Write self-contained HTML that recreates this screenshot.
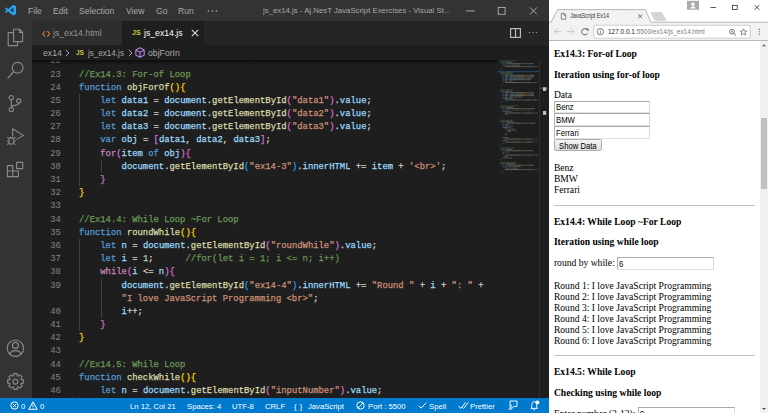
<!DOCTYPE html>
<html><head><meta charset="utf-8">
<style>
*{box-sizing:border-box}
html,body{margin:0;padding:0}
body{width:768px;height:413px;overflow:hidden;position:relative;background:#1e1e1e;font-family:"Liberation Sans",sans-serif}
.abs{position:absolute}
#vs{position:absolute;left:0;top:0;width:549px;height:413px;background:#1e1e1e;overflow:hidden}
#title{position:absolute;left:0;top:0;width:549px;height:21px;background:#333333;color:#a8a8a8;font-size:8.6px}
#title .m{position:absolute;top:5px;line-height:12px;white-space:nowrap}
#act{position:absolute;left:0;top:21px;width:32px;height:377px;background:#333333}
#tabs{position:absolute;left:32px;top:21px;width:517px;height:24px;background:#252526}
.tab{position:absolute;top:0;height:24px;font-size:8.7px;white-space:nowrap}
#crumb{position:absolute;left:32px;top:45px;width:517px;height:15px;background:#1e1e1e;color:#a9a9a9;font-size:8.7px;white-space:nowrap}
#editor{position:absolute;left:32px;top:60px;width:517px;height:338px;overflow:hidden}
#codewrap{position:absolute;left:-32px;top:-60px;width:549px;height:413px}
.ln{position:absolute;left:30px;width:30.8px;text-align:right;height:13.19px;line-height:13.19px;font-family:"Liberation Mono",monospace;font-size:9.7px;color:#858585;transform:scaleX(0.9153);transform-origin:100% 0}
.cl{position:absolute;left:79.2px;height:13.19px;line-height:13.19px;font-family:"Liberation Mono",monospace;font-size:9.7px;color:#d4d4d4;white-space:pre;-webkit-text-stroke-width:0.25px;transform:scaleX(0.9153);transform-origin:0 0}
.ig{position:absolute;width:1px;background:#404040}
#status{position:absolute;left:0;top:398px;width:549px;height:15px;background:#007acc;color:#ffffff;font-size:7.7px;white-space:nowrap}
#status .s{position:absolute;top:3px;line-height:11px}
#br{position:absolute;left:549px;top:0;width:219px;height:413px;background:#ffffff;overflow:hidden}
.pt{position:absolute;left:4.9px;height:11px;line-height:11px;font-family:"Liberation Serif",serif;font-size:9.6px;color:#000;white-space:nowrap}
.pb{font-weight:bold}
.inp{position:absolute;background:#fff;border:1px solid #c0c0c0;border-top-color:#a8a8a8;border-left-color:#b4b4b4;border-bottom-color:#e0e0e0;border-right-color:#d8d8d8}
.it{position:absolute;font-size:8.5px;line-height:10px;color:#000;white-space:nowrap;transform:scaleX(0.905);transform-origin:0 0;margin-top:0.4px}
.hr{position:absolute;left:4.9px;width:201px;height:1px;background:#c0c0c0}
</style></head>
<body>
<div id="vs">
  <div id="title">
    <svg class="abs" style="left:4.8px;top:5.4px" width="11.2" height="10.4" viewBox="0 0 100 100" preserveAspectRatio="none"><path d="M96.46 10.8 L75.86 0.87 C73.48 -0.28 70.63 0.2 68.76 2.07 L29.35 38.04 L12.19 25.01 C10.59 23.79 8.35 23.89 6.86 25.25 L1.36 30.25 C-0.45 31.9 -0.46 34.75 1.35 36.4 L16.24 50 L1.35 63.6 C-0.46 65.25 -0.45 68.1 1.36 69.75 L6.86 74.75 C8.35 76.11 10.59 76.21 12.19 74.99 L29.35 61.96 L68.76 97.93 C70.63 99.8 73.48 100.28 75.86 99.13 L96.46 89.2 C98.62 88.16 100 85.97 100 83.57 V16.43 C100 14.03 98.62 11.84 96.46 10.8 Z M75.02 72.7 L45.11 50 L75.02 27.3 V72.7 Z" fill="#23a3f0" fill-rule="evenodd"/></svg>
    <span class="m" style="left:28px">File</span>
    <span class="m" style="left:53px">Edit</span>
    <span class="m" style="left:79px">Selection</span>
    <span class="m" style="left:126px">View</span>
    <span class="m" style="left:156px">Go</span>
    <span class="m" style="left:178px">Run</span>
    <svg class="abs" style="left:206px;top:9px" width="13" height="4" viewBox="0 0 13 4"><circle cx="2.4" cy="2" r="0.85" fill="#a8a8a8"/><circle cx="6.4" cy="2" r="0.85" fill="#a8a8a8"/><circle cx="10.4" cy="2" r="0.85" fill="#a8a8a8"/></svg>
    <svg class="abs" style="left:460px;top:0" width="89" height="21" viewBox="460 0 89 21" fill="none" stroke="#b4b4b4" stroke-width="0.9">
      <path d="M466 10.9 H474.5"/>
      <rect x="498.2" y="7.4" width="6.9" height="6.9"/>
      <path d="M530 7.4 L537 14.4 M537 7.4 L530 14.4"/>
    </svg>
    <span class="m" style="left:263px;font-size:7.8px">js_ex14.js - Aj.NesT JavaScript Exercises - Visual St...</span>
  </div>
  <div id="act">
    <svg class="abs" style="left:0;top:0" width="32" height="377" viewBox="0 21 32 377" fill="none" stroke="#8b8b8b" stroke-width="1.1" stroke-linejoin="round">
      <!-- explorer -->
      <path d="M13.6 29.2 H19.6 L22.6 32.2 V41.6 H13.6 Z M19.4 29.2 V32.4 H22.6"/>
      <path d="M13.6 32.6 H8.2 V45.6 H17.6 V41.8"/>
      <!-- search -->
      <circle cx="17.6" cy="67.8" r="5.4"/>
      <path d="M13.8 71.6 L7.6 78.4" stroke-width="1.3"/>
      <!-- source control -->
      <circle cx="11.3" cy="97.6" r="2.1"/>
      <circle cx="18.8" cy="101" r="2.1"/>
      <circle cx="11.3" cy="109.6" r="2.1"/>
      <path d="M11.3 99.7 V107.5 M18.8 103.1 Q18.8 105.2 15 105.4 Q11.3 105.6 11.3 107.5"/>
      <!-- run debug -->
      <path d="M12.6 136.5 V128.8 L23.4 135.4 L16.4 139.6"/>
      <ellipse cx="11.3" cy="141" rx="2.6" ry="3.2"/>
      <path d="M8.7 138.2 L7.2 137.2 M13.9 138.2 L15.4 137.2 M8.4 141 H6.8 M14.2 141 H15.8 M8.7 143.6 L7.2 144.6 M13.9 143.6 L15.4 144.6 M9.8 137.8 H12.8"/>
      <!-- extensions -->
      <path d="M7.4 165.6 H12.8 V171 H7.4 Z M7.4 171 H12.8 V176.6 H7.4 Z M12.8 171 H18.4 V176.6 H12.8 Z"/>
      <rect x="16.6" y="162.4" width="6.2" height="6.2"/>
      <!-- account -->
      <circle cx="15.4" cy="348.2" r="8.2"/>
      <circle cx="15.4" cy="345.4" r="3"/>
      <path d="M9.8 354.2 Q11 350.6 15.4 350.6 Q19.8 350.6 21 354.2"/>
      <!-- gear -->
      <circle cx="15.4" cy="381.7" r="2.4"/>
    </svg>
    <svg class="abs" style="left:7px;top:352.2px" width="17" height="17" viewBox="-8.5 -8.5 17 17"><path fill="none" stroke="#8b8b8b" stroke-width="1.1" stroke-linejoin="round" d="M5.71 -1.85 L7.84 -1.59 L7.84 1.59 L5.71 1.85 L5.35 2.72 L6.67 4.42 L4.42 6.67 L2.72 5.35 L1.85 5.71 L1.59 7.84 L-1.59 7.84 L-1.85 5.71 L-2.72 5.35 L-4.42 6.67 L-6.67 4.42 L-5.35 2.72 L-5.71 1.85 L-7.84 1.59 L-7.84 -1.59 L-5.71 -1.85 L-5.35 -2.72 L-6.67 -4.42 L-4.42 -6.67 L-2.72 -5.35 L-1.85 -5.71 L-1.59 -7.84 L1.59 -7.84 L1.85 -5.71 L2.72 -5.35 L4.42 -6.67 L6.67 -4.42 L5.35 -2.72 Z"/></svg>
  </div>
  <div id="tabs">
    <div class="tab" style="left:0;width:90px;background:#2d2d2d;color:#969696">
      <svg class="abs" style="left:9.5px;top:8.5px" width="9" height="8" viewBox="0 0 9 8"><path d="M3 1 L0.8 3.8 L3 6.6 M5.4 1 L7.6 3.8 L5.4 6.6" stroke="#e37933" stroke-width="1.05" fill="none"/></svg>
      <span class="abs" style="left:21px;top:6px;line-height:12px">js_ex14.html</span>
    </div>
    <div class="tab" style="left:90px;width:82px;background:#1e1e1e;color:#ffffff">
      <span class="abs" style="left:10px;top:7px;line-height:10px;font-size:7px;font-weight:bold;color:#cbcb41">JS</span>
      <span class="abs" style="left:22px;top:6px;line-height:12px">js_ex14.js</span>
      <svg class="abs" style="left:69px;top:8px" width="8" height="8" viewBox="0 0 8 8"><path d="M0.8 0.8 L7.2 7.2 M7.2 0.8 L0.8 7.2" stroke="#d8d8d8" stroke-width="1.15"/></svg>
    </div>
    <svg class="abs" style="left:478px;top:7px" width="11" height="10" viewBox="0 0 11 10"><rect x="0.6" y="0.6" width="9.8" height="8.8" fill="none" stroke="#c5c5c5" stroke-width="1.1"/><path d="M5.5 0.6 V9.4" stroke="#c5c5c5" stroke-width="1.1"/></svg>
    <span class="abs" style="left:496px;top:5px;line-height:12px;color:#c5c5c5;font-size:9px;letter-spacing:0.5px">···</span>
  </div>
  <div id="crumb">
    <span class="abs" style="left:11px;top:2px;line-height:12px">ex14</span>
    <svg class="abs" style="left:33px;top:4px" width="5" height="8" viewBox="0 0 5 8"><path d="M0.8 0.8 L4 4 L0.8 7.2" stroke="#a9a9a9" stroke-width="1" fill="none"/></svg>
    <span class="abs" style="left:44px;top:3px;line-height:10px;font-size:6.5px;font-weight:bold;color:#cbcb41">JS</span>
    <span class="abs" style="left:56px;top:2px;line-height:12px;transform:scaleX(0.93);transform-origin:0 0">js_ex14.js</span>
    <svg class="abs" style="left:96px;top:4px" width="5" height="8" viewBox="0 0 5 8"><path d="M0.8 0.8 L4 4 L0.8 7.2" stroke="#a9a9a9" stroke-width="1" fill="none"/></svg>
    <svg class="abs" style="left:103px;top:2px" width="10" height="11" viewBox="0 0 10 11"><path d="M5 0.7 L9.2 3 V8 L5 10.3 L0.8 8 V3 Z M0.8 3 L5 5.3 L9.2 3 M5 5.3 V10.3" stroke="#b180d7" stroke-width="1.1" fill="none" stroke-linejoin="round"/></svg>
    <span class="abs" style="left:116px;top:2px;line-height:12px">objForIn</span>
  </div>
  <div id="editor"><div id="codewrap">
<div class="ig" style="left:79.2px;top:93.88px;height:92.33px"></div>
<div class="ig" style="left:100.5px;top:159.83px;height:13.19px"></div>
<div class="ig" style="left:79.2px;top:238.97px;height:92.33px"></div>
<div class="ig" style="left:100.5px;top:278.54px;height:39.57px"></div>
<div class="ig" style="left:79.2px;top:397.25px;height:26.38px"></div>
<div class="ln" style="top:54.31px">22</div>
<div class="ln" style="top:67.50px">23</div>
<div class="cl" style="top:67.50px"><span style="color:#6A9955">//Ex14.3: For-of Loop</span></div>
<div class="ln" style="top:80.69px">24</div>
<div class="cl" style="top:80.69px"><span style="color:#569CD6">function</span><span style="color:#D4D4D4"> </span><span style="color:#DCDCAA">objForOf</span><span style="color:#FFD700">(){</span></div>
<div class="ln" style="top:93.88px">25</div>
<div class="cl" style="top:93.88px"><span style="color:#D4D4D4">    </span><span style="color:#569CD6">let</span><span style="color:#D4D4D4"> </span><span style="color:#9CDCFE">data1</span><span style="color:#D4D4D4"> = </span><span style="color:#9CDCFE">document</span><span style="color:#D4D4D4">.</span><span style="color:#DCDCAA">getElementById</span><span style="color:#DA70D6">(</span><span style="color:#CE9178">&quot;data1&quot;</span><span style="color:#DA70D6">)</span><span style="color:#D4D4D4">.</span><span style="color:#9CDCFE">value</span><span style="color:#D4D4D4">;</span></div>
<div class="ln" style="top:107.07px">26</div>
<div class="cl" style="top:107.07px"><span style="color:#D4D4D4">    </span><span style="color:#569CD6">let</span><span style="color:#D4D4D4"> </span><span style="color:#9CDCFE">data2</span><span style="color:#D4D4D4"> = </span><span style="color:#9CDCFE">document</span><span style="color:#D4D4D4">.</span><span style="color:#DCDCAA">getElementById</span><span style="color:#DA70D6">(</span><span style="color:#CE9178">&quot;data2&quot;</span><span style="color:#DA70D6">)</span><span style="color:#D4D4D4">.</span><span style="color:#9CDCFE">value</span><span style="color:#D4D4D4">;</span></div>
<div class="ln" style="top:120.26px">27</div>
<div class="cl" style="top:120.26px"><span style="color:#D4D4D4">    </span><span style="color:#569CD6">let</span><span style="color:#D4D4D4"> </span><span style="color:#9CDCFE">data3</span><span style="color:#D4D4D4"> = </span><span style="color:#9CDCFE">document</span><span style="color:#D4D4D4">.</span><span style="color:#DCDCAA">getElementById</span><span style="color:#DA70D6">(</span><span style="color:#CE9178">&quot;data3&quot;</span><span style="color:#DA70D6">)</span><span style="color:#D4D4D4">.</span><span style="color:#9CDCFE">value</span><span style="color:#D4D4D4">;</span></div>
<div class="ln" style="top:133.45px">28</div>
<div class="cl" style="top:133.45px"><span style="color:#D4D4D4">    </span><span style="color:#569CD6">var</span><span style="color:#D4D4D4"> </span><span style="color:#9CDCFE">obj</span><span style="color:#D4D4D4"> = </span><span style="color:#DA70D6">[</span><span style="color:#9CDCFE">data1</span><span style="color:#D4D4D4">, </span><span style="color:#9CDCFE">data2</span><span style="color:#D4D4D4">, </span><span style="color:#9CDCFE">data3</span><span style="color:#DA70D6">]</span><span style="color:#D4D4D4">;</span></div>
<div class="ln" style="top:146.64px">29</div>
<div class="cl" style="top:146.64px"><span style="color:#D4D4D4">    </span><span style="color:#C586C0">for</span><span style="color:#DA70D6">(</span><span style="color:#9CDCFE">item</span><span style="color:#D4D4D4"> </span><span style="color:#569CD6">of</span><span style="color:#D4D4D4"> </span><span style="color:#9CDCFE">obj</span><span style="color:#DA70D6">){</span></div>
<div class="ln" style="top:159.83px">30</div>
<div class="cl" style="top:159.83px"><span style="color:#D4D4D4">        </span><span style="color:#9CDCFE">document</span><span style="color:#D4D4D4">.</span><span style="color:#DCDCAA">getElementById</span><span style="color:#179FFF">(</span><span style="color:#CE9178">&quot;ex14-3&quot;</span><span style="color:#179FFF">)</span><span style="color:#D4D4D4">.</span><span style="color:#9CDCFE">innerHTML</span><span style="color:#D4D4D4"> += </span><span style="color:#9CDCFE">item</span><span style="color:#D4D4D4"> + </span><span style="color:#CE9178">&#x27;&lt;br&gt;&#x27;</span><span style="color:#D4D4D4">;</span></div>
<div class="ln" style="top:173.02px">31</div>
<div class="cl" style="top:173.02px"><span style="color:#D4D4D4">    </span><span style="color:#DA70D6">}</span></div>
<div class="ln" style="top:186.21px">32</div>
<div class="cl" style="top:186.21px"><span style="color:#FFD700">}</span></div>
<div class="ln" style="top:199.40px">33</div>
<div class="ln" style="top:212.59px">34</div>
<div class="cl" style="top:212.59px"><span style="color:#6A9955">//Ex14.4: While Loop ~For Loop</span></div>
<div class="ln" style="top:225.78px">35</div>
<div class="cl" style="top:225.78px"><span style="color:#569CD6">function</span><span style="color:#D4D4D4"> </span><span style="color:#DCDCAA">roundWhile</span><span style="color:#FFD700">(){</span></div>
<div class="ln" style="top:238.97px">36</div>
<div class="cl" style="top:238.97px"><span style="color:#D4D4D4">    </span><span style="color:#569CD6">let</span><span style="color:#D4D4D4"> </span><span style="color:#9CDCFE">n</span><span style="color:#D4D4D4"> = </span><span style="color:#9CDCFE">document</span><span style="color:#D4D4D4">.</span><span style="color:#DCDCAA">getElementById</span><span style="color:#DA70D6">(</span><span style="color:#CE9178">&quot;roundWhile&quot;</span><span style="color:#DA70D6">)</span><span style="color:#D4D4D4">.</span><span style="color:#9CDCFE">value</span><span style="color:#D4D4D4">;</span></div>
<div class="ln" style="top:252.16px">37</div>
<div class="cl" style="top:252.16px"><span style="color:#D4D4D4">    </span><span style="color:#569CD6">let</span><span style="color:#D4D4D4"> </span><span style="color:#9CDCFE">i</span><span style="color:#D4D4D4"> = </span><span style="color:#B5CEA8">1</span><span style="color:#D4D4D4">;      </span><span style="color:#6A9955">//for(let i = 1; i &lt;= n; i++)</span></div>
<div class="ln" style="top:265.35px">38</div>
<div class="cl" style="top:265.35px"><span style="color:#D4D4D4">    </span><span style="color:#C586C0">while</span><span style="color:#DA70D6">(</span><span style="color:#9CDCFE">i</span><span style="color:#D4D4D4"> &lt;= </span><span style="color:#9CDCFE">n</span><span style="color:#DA70D6">){</span></div>
<div class="ln" style="top:278.54px">39</div>
<div class="cl" style="top:278.54px"><span style="color:#D4D4D4">        </span><span style="color:#9CDCFE">document</span><span style="color:#D4D4D4">.</span><span style="color:#DCDCAA">getElementById</span><span style="color:#179FFF">(</span><span style="color:#CE9178">&quot;ex14-4&quot;</span><span style="color:#179FFF">)</span><span style="color:#D4D4D4">.</span><span style="color:#9CDCFE">innerHTML</span><span style="color:#D4D4D4"> += </span><span style="color:#CE9178">&quot;Round &quot;</span><span style="color:#D4D4D4"> + </span><span style="color:#9CDCFE">i</span><span style="color:#D4D4D4"> + </span><span style="color:#CE9178">&quot;: &quot;</span><span style="color:#D4D4D4"> +</span></div>
<div class="cl" style="top:291.73px"><span style="color:#D4D4D4">        </span><span style="color:#CE9178">&quot;I love JavaScript Programming &lt;br&gt;&quot;</span><span style="color:#D4D4D4">;</span></div>
<div class="ln" style="top:304.92px">40</div>
<div class="cl" style="top:304.92px"><span style="color:#D4D4D4">        </span><span style="color:#9CDCFE">i</span><span style="color:#D4D4D4">++;</span></div>
<div class="ln" style="top:318.11px">41</div>
<div class="cl" style="top:318.11px"><span style="color:#D4D4D4">    </span><span style="color:#DA70D6">}</span></div>
<div class="ln" style="top:331.30px">42</div>
<div class="cl" style="top:331.30px"><span style="color:#FFD700">}</span></div>
<div class="ln" style="top:344.49px">43</div>
<div class="ln" style="top:357.68px">44</div>
<div class="cl" style="top:357.68px"><span style="color:#6A9955">//Ex14.5: While Loop</span></div>
<div class="ln" style="top:370.87px">45</div>
<div class="cl" style="top:370.87px"><span style="color:#569CD6">function</span><span style="color:#D4D4D4"> </span><span style="color:#DCDCAA">checkWhile</span><span style="color:#FFD700">(){</span></div>
<div class="ln" style="top:384.06px">46</div>
<div class="cl" style="top:384.06px"><span style="color:#D4D4D4">    </span><span style="color:#569CD6">let</span><span style="color:#D4D4D4"> </span><span style="color:#9CDCFE">n</span><span style="color:#D4D4D4"> = </span><span style="color:#9CDCFE">document</span><span style="color:#D4D4D4">.</span><span style="color:#DCDCAA">getElementById</span><span style="color:#DA70D6">(</span><span style="color:#CE9178">&quot;inputNumber&quot;</span><span style="color:#DA70D6">)</span><span style="color:#D4D4D4">.</span><span style="color:#9CDCFE">value</span><span style="color:#D4D4D4">;</span></div>
<div class="ln" style="top:397.25px">47</div>
<div class="cl" style="top:397.25px"><span style="color:#D4D4D4">    </span><span style="color:#569CD6">let</span><span style="color:#D4D4D4"> </span><span style="color:#9CDCFE">i</span><span style="color:#D4D4D4"> = </span><span style="color:#B5CEA8">2</span><span style="color:#D4D4D4">;</span></div>
<div class="abs" style="left:0;top:60px;width:497px;height:5px;background:linear-gradient(rgba(0,0,0,0.55),rgba(0,0,0,0))"></div>
<svg class="abs" style="left:497px;top:60px" width="52" height="338" viewBox="497 60 52 338">
<rect x="497" y="71.2" width="42" height="1" fill="#264f78" opacity="0.9"/>
<g opacity="0.36">
<rect x="500.00" y="60.30" width="5.58" height="1.01" fill="#6A9955"/>
<rect x="506.20" y="60.30" width="1.86" height="1.01" fill="#6A9955"/>
<rect x="508.68" y="60.30" width="2.48" height="1.01" fill="#6A9955"/>
<rect x="511.78" y="60.30" width="3.72" height="1.01" fill="#6A9955"/>
<rect x="500.00" y="61.75" width="4.96" height="1.01" fill="#569CD6"/>
<rect x="505.58" y="61.75" width="4.96" height="1.01" fill="#DCDCAA"/>
<rect x="510.54" y="61.75" width="0.62" height="1.01" fill="#D4D4D4"/>
<rect x="511.16" y="61.75" width="0.62" height="1.01" fill="#D4D4D4"/>
<rect x="511.78" y="61.75" width="0.62" height="1.01" fill="#D4D4D4"/>
<rect x="502.48" y="63.20" width="1.86" height="1.01" fill="#569CD6"/>
<rect x="504.96" y="63.20" width="0.62" height="1.01" fill="#9CDCFE"/>
<rect x="506.20" y="63.20" width="0.62" height="1.01" fill="#D4D4D4"/>
<rect x="507.44" y="63.20" width="4.96" height="1.01" fill="#9CDCFE"/>
<rect x="512.40" y="63.20" width="0.62" height="1.01" fill="#D4D4D4"/>
<rect x="513.02" y="63.20" width="8.68" height="1.01" fill="#DCDCAA"/>
<rect x="521.70" y="63.20" width="0.62" height="1.01" fill="#D4D4D4"/>
<rect x="522.32" y="63.20" width="6.20" height="1.01" fill="#CE9178"/>
<rect x="528.52" y="63.20" width="0.62" height="1.01" fill="#D4D4D4"/>
<rect x="529.14" y="63.20" width="0.62" height="1.01" fill="#D4D4D4"/>
<rect x="529.76" y="63.20" width="3.10" height="1.01" fill="#9CDCFE"/>
<rect x="532.86" y="63.20" width="0.62" height="1.01" fill="#D4D4D4"/>
<rect x="502.48" y="64.65" width="1.86" height="1.01" fill="#C586C0"/>
<rect x="504.34" y="64.65" width="0.62" height="1.01" fill="#D4D4D4"/>
<rect x="504.96" y="64.65" width="1.86" height="1.01" fill="#569CD6"/>
<rect x="507.44" y="64.65" width="0.62" height="1.01" fill="#9CDCFE"/>
<rect x="508.68" y="64.65" width="0.62" height="1.01" fill="#D4D4D4"/>
<rect x="509.92" y="64.65" width="0.62" height="1.01" fill="#B5CEA8"/>
<rect x="510.54" y="64.65" width="0.62" height="1.01" fill="#D4D4D4"/>
<rect x="511.78" y="64.65" width="0.62" height="1.01" fill="#9CDCFE"/>
<rect x="513.02" y="64.65" width="0.62" height="1.01" fill="#D4D4D4"/>
<rect x="513.64" y="64.65" width="0.62" height="1.01" fill="#D4D4D4"/>
<rect x="514.88" y="64.65" width="0.62" height="1.01" fill="#9CDCFE"/>
<rect x="515.50" y="64.65" width="0.62" height="1.01" fill="#D4D4D4"/>
<rect x="516.74" y="64.65" width="0.62" height="1.01" fill="#9CDCFE"/>
<rect x="517.36" y="64.65" width="0.62" height="1.01" fill="#D4D4D4"/>
<rect x="517.98" y="64.65" width="0.62" height="1.01" fill="#D4D4D4"/>
<rect x="518.60" y="64.65" width="0.62" height="1.01" fill="#D4D4D4"/>
<rect x="519.22" y="64.65" width="0.62" height="1.01" fill="#D4D4D4"/>
<rect x="504.96" y="66.10" width="4.96" height="1.01" fill="#9CDCFE"/>
<rect x="509.92" y="66.10" width="0.62" height="1.01" fill="#D4D4D4"/>
<rect x="510.54" y="66.10" width="8.68" height="1.01" fill="#DCDCAA"/>
<rect x="519.22" y="66.10" width="0.62" height="1.01" fill="#D4D4D4"/>
<rect x="519.84" y="66.10" width="4.96" height="1.01" fill="#CE9178"/>
<rect x="524.80" y="66.10" width="0.62" height="1.01" fill="#D4D4D4"/>
<rect x="525.42" y="66.10" width="0.62" height="1.01" fill="#D4D4D4"/>
<rect x="526.04" y="66.10" width="5.58" height="1.01" fill="#9CDCFE"/>
<rect x="532.24" y="66.10" width="0.62" height="1.01" fill="#D4D4D4"/>
<rect x="532.86" y="66.10" width="0.62" height="1.01" fill="#D4D4D4"/>
<rect x="534.10" y="66.10" width="3.72" height="1.01" fill="#CE9178"/>
<rect x="502.48" y="67.55" width="0.62" height="1.01" fill="#D4D4D4"/>
<rect x="500.00" y="69.00" width="0.62" height="1.01" fill="#D4D4D4"/>
<rect x="500.00" y="71.90" width="5.58" height="1.01" fill="#6A9955"/>
<rect x="506.20" y="71.90" width="3.72" height="1.01" fill="#6A9955"/>
<rect x="510.54" y="71.90" width="2.48" height="1.01" fill="#6A9955"/>
<rect x="500.00" y="73.35" width="4.96" height="1.01" fill="#569CD6"/>
<rect x="505.58" y="73.35" width="4.96" height="1.01" fill="#DCDCAA"/>
<rect x="510.54" y="73.35" width="0.62" height="1.01" fill="#D4D4D4"/>
<rect x="511.16" y="73.35" width="0.62" height="1.01" fill="#D4D4D4"/>
<rect x="511.78" y="73.35" width="0.62" height="1.01" fill="#D4D4D4"/>
<rect x="502.48" y="74.80" width="1.86" height="1.01" fill="#569CD6"/>
<rect x="504.96" y="74.80" width="3.10" height="1.01" fill="#9CDCFE"/>
<rect x="508.68" y="74.80" width="0.62" height="1.01" fill="#D4D4D4"/>
<rect x="509.92" y="74.80" width="4.96" height="1.01" fill="#9CDCFE"/>
<rect x="514.88" y="74.80" width="0.62" height="1.01" fill="#D4D4D4"/>
<rect x="515.50" y="74.80" width="8.68" height="1.01" fill="#DCDCAA"/>
<rect x="524.18" y="74.80" width="0.62" height="1.01" fill="#D4D4D4"/>
<rect x="524.80" y="74.80" width="4.34" height="1.01" fill="#CE9178"/>
<rect x="529.14" y="74.80" width="0.62" height="1.01" fill="#D4D4D4"/>
<rect x="529.76" y="74.80" width="0.62" height="1.01" fill="#D4D4D4"/>
<rect x="530.38" y="74.80" width="3.10" height="1.01" fill="#9CDCFE"/>
<rect x="533.48" y="74.80" width="0.62" height="1.01" fill="#D4D4D4"/>
<rect x="502.48" y="76.25" width="1.86" height="1.01" fill="#569CD6"/>
<rect x="504.96" y="76.25" width="3.10" height="1.01" fill="#9CDCFE"/>
<rect x="508.68" y="76.25" width="0.62" height="1.01" fill="#D4D4D4"/>
<rect x="509.92" y="76.25" width="4.96" height="1.01" fill="#9CDCFE"/>
<rect x="514.88" y="76.25" width="0.62" height="1.01" fill="#D4D4D4"/>
<rect x="515.50" y="76.25" width="8.68" height="1.01" fill="#DCDCAA"/>
<rect x="524.18" y="76.25" width="0.62" height="1.01" fill="#D4D4D4"/>
<rect x="524.80" y="76.25" width="4.34" height="1.01" fill="#CE9178"/>
<rect x="529.14" y="76.25" width="0.62" height="1.01" fill="#D4D4D4"/>
<rect x="529.76" y="76.25" width="0.62" height="1.01" fill="#D4D4D4"/>
<rect x="530.38" y="76.25" width="3.10" height="1.01" fill="#9CDCFE"/>
<rect x="533.48" y="76.25" width="0.62" height="1.01" fill="#D4D4D4"/>
<rect x="502.48" y="77.70" width="1.86" height="1.01" fill="#569CD6"/>
<rect x="504.96" y="77.70" width="1.86" height="1.01" fill="#9CDCFE"/>
<rect x="507.44" y="77.70" width="0.62" height="1.01" fill="#D4D4D4"/>
<rect x="508.68" y="77.70" width="4.96" height="1.01" fill="#9CDCFE"/>
<rect x="513.64" y="77.70" width="0.62" height="1.01" fill="#D4D4D4"/>
<rect x="514.26" y="77.70" width="8.68" height="1.01" fill="#DCDCAA"/>
<rect x="522.94" y="77.70" width="0.62" height="1.01" fill="#D4D4D4"/>
<rect x="523.56" y="77.70" width="3.10" height="1.01" fill="#CE9178"/>
<rect x="526.66" y="77.70" width="0.62" height="1.01" fill="#D4D4D4"/>
<rect x="527.28" y="77.70" width="0.62" height="1.01" fill="#D4D4D4"/>
<rect x="527.90" y="77.70" width="3.10" height="1.01" fill="#9CDCFE"/>
<rect x="531.00" y="77.70" width="0.62" height="1.01" fill="#D4D4D4"/>
<rect x="502.48" y="79.15" width="1.86" height="1.01" fill="#569CD6"/>
<rect x="504.96" y="79.15" width="1.86" height="1.01" fill="#9CDCFE"/>
<rect x="507.44" y="79.15" width="0.62" height="1.01" fill="#D4D4D4"/>
<rect x="508.68" y="79.15" width="0.62" height="1.01" fill="#D4D4D4"/>
<rect x="509.30" y="79.15" width="3.10" height="1.01" fill="#9CDCFE"/>
<rect x="512.40" y="79.15" width="0.62" height="1.01" fill="#D4D4D4"/>
<rect x="513.02" y="79.15" width="3.10" height="1.01" fill="#9CDCFE"/>
<rect x="516.12" y="79.15" width="0.62" height="1.01" fill="#D4D4D4"/>
<rect x="517.36" y="79.15" width="3.10" height="1.01" fill="#9CDCFE"/>
<rect x="520.46" y="79.15" width="0.62" height="1.01" fill="#D4D4D4"/>
<rect x="521.08" y="79.15" width="3.10" height="1.01" fill="#9CDCFE"/>
<rect x="524.18" y="79.15" width="0.62" height="1.01" fill="#D4D4D4"/>
<rect x="525.42" y="79.15" width="1.86" height="1.01" fill="#9CDCFE"/>
<rect x="527.28" y="79.15" width="0.62" height="1.01" fill="#D4D4D4"/>
<rect x="527.90" y="79.15" width="1.86" height="1.01" fill="#9CDCFE"/>
<rect x="529.76" y="79.15" width="0.62" height="1.01" fill="#D4D4D4"/>
<rect x="530.38" y="79.15" width="0.62" height="1.01" fill="#D4D4D4"/>
<rect x="502.48" y="80.60" width="1.86" height="1.01" fill="#C586C0"/>
<rect x="504.34" y="80.60" width="0.62" height="1.01" fill="#D4D4D4"/>
<rect x="504.96" y="80.60" width="1.86" height="1.01" fill="#9CDCFE"/>
<rect x="507.44" y="80.60" width="1.24" height="1.01" fill="#569CD6"/>
<rect x="509.30" y="80.60" width="1.86" height="1.01" fill="#9CDCFE"/>
<rect x="511.16" y="80.60" width="0.62" height="1.01" fill="#D4D4D4"/>
<rect x="511.78" y="80.60" width="0.62" height="1.01" fill="#D4D4D4"/>
<rect x="504.96" y="82.05" width="4.96" height="1.01" fill="#9CDCFE"/>
<rect x="509.92" y="82.05" width="0.62" height="1.01" fill="#D4D4D4"/>
<rect x="510.54" y="82.05" width="8.68" height="1.01" fill="#DCDCAA"/>
<rect x="519.22" y="82.05" width="0.62" height="1.01" fill="#D4D4D4"/>
<rect x="519.84" y="82.05" width="4.96" height="1.01" fill="#CE9178"/>
<rect x="524.80" y="82.05" width="0.62" height="1.01" fill="#D4D4D4"/>
<rect x="525.42" y="82.05" width="0.62" height="1.01" fill="#D4D4D4"/>
<rect x="526.04" y="82.05" width="5.58" height="1.01" fill="#9CDCFE"/>
<rect x="532.24" y="82.05" width="0.62" height="1.01" fill="#D4D4D4"/>
<rect x="532.86" y="82.05" width="0.62" height="1.01" fill="#D4D4D4"/>
<rect x="534.10" y="82.05" width="1.86" height="1.01" fill="#9CDCFE"/>
<rect x="536.58" y="82.05" width="0.62" height="1.01" fill="#D4D4D4"/>
<rect x="537.82" y="82.05" width="0.18" height="1.01" fill="#CE9178"/>
<rect x="502.48" y="83.50" width="0.62" height="1.01" fill="#D4D4D4"/>
<rect x="500.00" y="84.95" width="0.62" height="1.01" fill="#D4D4D4"/>
<rect x="500.00" y="89.30" width="5.58" height="1.01" fill="#6A9955"/>
<rect x="506.20" y="89.30" width="3.72" height="1.01" fill="#6A9955"/>
<rect x="510.54" y="89.30" width="2.48" height="1.01" fill="#6A9955"/>
<rect x="500.00" y="90.75" width="4.96" height="1.01" fill="#569CD6"/>
<rect x="505.58" y="90.75" width="4.96" height="1.01" fill="#DCDCAA"/>
<rect x="510.54" y="90.75" width="0.62" height="1.01" fill="#D4D4D4"/>
<rect x="511.16" y="90.75" width="0.62" height="1.01" fill="#D4D4D4"/>
<rect x="511.78" y="90.75" width="0.62" height="1.01" fill="#D4D4D4"/>
<rect x="502.48" y="92.20" width="1.86" height="1.01" fill="#569CD6"/>
<rect x="504.96" y="92.20" width="3.10" height="1.01" fill="#9CDCFE"/>
<rect x="508.68" y="92.20" width="0.62" height="1.01" fill="#D4D4D4"/>
<rect x="509.92" y="92.20" width="4.96" height="1.01" fill="#9CDCFE"/>
<rect x="514.88" y="92.20" width="0.62" height="1.01" fill="#D4D4D4"/>
<rect x="515.50" y="92.20" width="8.68" height="1.01" fill="#DCDCAA"/>
<rect x="524.18" y="92.20" width="0.62" height="1.01" fill="#D4D4D4"/>
<rect x="524.80" y="92.20" width="4.34" height="1.01" fill="#CE9178"/>
<rect x="529.14" y="92.20" width="0.62" height="1.01" fill="#D4D4D4"/>
<rect x="529.76" y="92.20" width="0.62" height="1.01" fill="#D4D4D4"/>
<rect x="530.38" y="92.20" width="3.10" height="1.01" fill="#9CDCFE"/>
<rect x="533.48" y="92.20" width="0.62" height="1.01" fill="#D4D4D4"/>
<rect x="502.48" y="93.65" width="1.86" height="1.01" fill="#569CD6"/>
<rect x="504.96" y="93.65" width="3.10" height="1.01" fill="#9CDCFE"/>
<rect x="508.68" y="93.65" width="0.62" height="1.01" fill="#D4D4D4"/>
<rect x="509.92" y="93.65" width="4.96" height="1.01" fill="#9CDCFE"/>
<rect x="514.88" y="93.65" width="0.62" height="1.01" fill="#D4D4D4"/>
<rect x="515.50" y="93.65" width="8.68" height="1.01" fill="#DCDCAA"/>
<rect x="524.18" y="93.65" width="0.62" height="1.01" fill="#D4D4D4"/>
<rect x="524.80" y="93.65" width="4.34" height="1.01" fill="#CE9178"/>
<rect x="529.14" y="93.65" width="0.62" height="1.01" fill="#D4D4D4"/>
<rect x="529.76" y="93.65" width="0.62" height="1.01" fill="#D4D4D4"/>
<rect x="530.38" y="93.65" width="3.10" height="1.01" fill="#9CDCFE"/>
<rect x="533.48" y="93.65" width="0.62" height="1.01" fill="#D4D4D4"/>
<rect x="502.48" y="95.10" width="1.86" height="1.01" fill="#569CD6"/>
<rect x="504.96" y="95.10" width="3.10" height="1.01" fill="#9CDCFE"/>
<rect x="508.68" y="95.10" width="0.62" height="1.01" fill="#D4D4D4"/>
<rect x="509.92" y="95.10" width="4.96" height="1.01" fill="#9CDCFE"/>
<rect x="514.88" y="95.10" width="0.62" height="1.01" fill="#D4D4D4"/>
<rect x="515.50" y="95.10" width="8.68" height="1.01" fill="#DCDCAA"/>
<rect x="524.18" y="95.10" width="0.62" height="1.01" fill="#D4D4D4"/>
<rect x="524.80" y="95.10" width="4.34" height="1.01" fill="#CE9178"/>
<rect x="529.14" y="95.10" width="0.62" height="1.01" fill="#D4D4D4"/>
<rect x="529.76" y="95.10" width="0.62" height="1.01" fill="#D4D4D4"/>
<rect x="530.38" y="95.10" width="3.10" height="1.01" fill="#9CDCFE"/>
<rect x="533.48" y="95.10" width="0.62" height="1.01" fill="#D4D4D4"/>
<rect x="502.48" y="96.55" width="1.86" height="1.01" fill="#569CD6"/>
<rect x="504.96" y="96.55" width="1.86" height="1.01" fill="#9CDCFE"/>
<rect x="507.44" y="96.55" width="0.62" height="1.01" fill="#D4D4D4"/>
<rect x="508.68" y="96.55" width="0.62" height="1.01" fill="#D4D4D4"/>
<rect x="509.30" y="96.55" width="3.10" height="1.01" fill="#9CDCFE"/>
<rect x="512.40" y="96.55" width="0.62" height="1.01" fill="#D4D4D4"/>
<rect x="513.64" y="96.55" width="3.10" height="1.01" fill="#9CDCFE"/>
<rect x="516.74" y="96.55" width="0.62" height="1.01" fill="#D4D4D4"/>
<rect x="517.98" y="96.55" width="3.10" height="1.01" fill="#9CDCFE"/>
<rect x="521.08" y="96.55" width="0.62" height="1.01" fill="#D4D4D4"/>
<rect x="521.70" y="96.55" width="0.62" height="1.01" fill="#D4D4D4"/>
<rect x="502.48" y="98.00" width="1.86" height="1.01" fill="#C586C0"/>
<rect x="504.34" y="98.00" width="0.62" height="1.01" fill="#D4D4D4"/>
<rect x="504.96" y="98.00" width="2.48" height="1.01" fill="#9CDCFE"/>
<rect x="508.06" y="98.00" width="1.24" height="1.01" fill="#569CD6"/>
<rect x="509.92" y="98.00" width="1.86" height="1.01" fill="#9CDCFE"/>
<rect x="511.78" y="98.00" width="0.62" height="1.01" fill="#D4D4D4"/>
<rect x="512.40" y="98.00" width="0.62" height="1.01" fill="#D4D4D4"/>
<rect x="504.96" y="99.45" width="4.96" height="1.01" fill="#9CDCFE"/>
<rect x="509.92" y="99.45" width="0.62" height="1.01" fill="#D4D4D4"/>
<rect x="510.54" y="99.45" width="8.68" height="1.01" fill="#DCDCAA"/>
<rect x="519.22" y="99.45" width="0.62" height="1.01" fill="#D4D4D4"/>
<rect x="519.84" y="99.45" width="4.96" height="1.01" fill="#CE9178"/>
<rect x="524.80" y="99.45" width="0.62" height="1.01" fill="#D4D4D4"/>
<rect x="525.42" y="99.45" width="0.62" height="1.01" fill="#D4D4D4"/>
<rect x="526.04" y="99.45" width="5.58" height="1.01" fill="#9CDCFE"/>
<rect x="532.24" y="99.45" width="0.62" height="1.01" fill="#D4D4D4"/>
<rect x="532.86" y="99.45" width="0.62" height="1.01" fill="#D4D4D4"/>
<rect x="534.10" y="99.45" width="2.48" height="1.01" fill="#9CDCFE"/>
<rect x="537.20" y="99.45" width="0.62" height="1.01" fill="#D4D4D4"/>
<rect x="502.48" y="100.90" width="0.62" height="1.01" fill="#D4D4D4"/>
<rect x="500.00" y="102.35" width="0.62" height="1.01" fill="#D4D4D4"/>
<rect x="500.00" y="105.25" width="5.58" height="1.01" fill="#6A9955"/>
<rect x="506.20" y="105.25" width="3.10" height="1.01" fill="#6A9955"/>
<rect x="509.92" y="105.25" width="2.48" height="1.01" fill="#6A9955"/>
<rect x="513.02" y="105.25" width="2.48" height="1.01" fill="#6A9955"/>
<rect x="516.12" y="105.25" width="2.48" height="1.01" fill="#6A9955"/>
<rect x="500.00" y="106.70" width="4.96" height="1.01" fill="#569CD6"/>
<rect x="505.58" y="106.70" width="6.20" height="1.01" fill="#DCDCAA"/>
<rect x="511.78" y="106.70" width="0.62" height="1.01" fill="#D4D4D4"/>
<rect x="512.40" y="106.70" width="0.62" height="1.01" fill="#D4D4D4"/>
<rect x="513.02" y="106.70" width="0.62" height="1.01" fill="#D4D4D4"/>
<rect x="502.48" y="108.15" width="1.86" height="1.01" fill="#569CD6"/>
<rect x="504.96" y="108.15" width="0.62" height="1.01" fill="#9CDCFE"/>
<rect x="506.20" y="108.15" width="0.62" height="1.01" fill="#D4D4D4"/>
<rect x="507.44" y="108.15" width="4.96" height="1.01" fill="#9CDCFE"/>
<rect x="512.40" y="108.15" width="0.62" height="1.01" fill="#D4D4D4"/>
<rect x="513.02" y="108.15" width="8.68" height="1.01" fill="#DCDCAA"/>
<rect x="521.70" y="108.15" width="0.62" height="1.01" fill="#D4D4D4"/>
<rect x="522.32" y="108.15" width="7.44" height="1.01" fill="#CE9178"/>
<rect x="529.76" y="108.15" width="0.62" height="1.01" fill="#D4D4D4"/>
<rect x="530.38" y="108.15" width="0.62" height="1.01" fill="#D4D4D4"/>
<rect x="531.00" y="108.15" width="3.10" height="1.01" fill="#9CDCFE"/>
<rect x="534.10" y="108.15" width="0.62" height="1.01" fill="#D4D4D4"/>
<rect x="502.48" y="109.60" width="1.86" height="1.01" fill="#569CD6"/>
<rect x="504.96" y="109.60" width="0.62" height="1.01" fill="#9CDCFE"/>
<rect x="506.20" y="109.60" width="0.62" height="1.01" fill="#D4D4D4"/>
<rect x="507.44" y="109.60" width="0.62" height="1.01" fill="#B5CEA8"/>
<rect x="508.06" y="109.60" width="0.62" height="1.01" fill="#D4D4D4"/>
<rect x="512.40" y="109.60" width="5.58" height="1.01" fill="#6A9955"/>
<rect x="518.60" y="109.60" width="0.62" height="1.01" fill="#6A9955"/>
<rect x="519.84" y="109.60" width="0.62" height="1.01" fill="#6A9955"/>
<rect x="521.08" y="109.60" width="1.24" height="1.01" fill="#6A9955"/>
<rect x="522.94" y="109.60" width="0.62" height="1.01" fill="#6A9955"/>
<rect x="524.18" y="109.60" width="1.24" height="1.01" fill="#6A9955"/>
<rect x="526.04" y="109.60" width="1.24" height="1.01" fill="#6A9955"/>
<rect x="527.90" y="109.60" width="2.48" height="1.01" fill="#6A9955"/>
<rect x="502.48" y="111.05" width="3.10" height="1.01" fill="#C586C0"/>
<rect x="505.58" y="111.05" width="0.62" height="1.01" fill="#D4D4D4"/>
<rect x="506.20" y="111.05" width="0.62" height="1.01" fill="#9CDCFE"/>
<rect x="507.44" y="111.05" width="0.62" height="1.01" fill="#D4D4D4"/>
<rect x="508.06" y="111.05" width="0.62" height="1.01" fill="#D4D4D4"/>
<rect x="509.30" y="111.05" width="0.62" height="1.01" fill="#9CDCFE"/>
<rect x="509.92" y="111.05" width="0.62" height="1.01" fill="#D4D4D4"/>
<rect x="510.54" y="111.05" width="0.62" height="1.01" fill="#D4D4D4"/>
<rect x="504.96" y="112.50" width="4.96" height="1.01" fill="#9CDCFE"/>
<rect x="509.92" y="112.50" width="0.62" height="1.01" fill="#D4D4D4"/>
<rect x="510.54" y="112.50" width="8.68" height="1.01" fill="#DCDCAA"/>
<rect x="519.22" y="112.50" width="0.62" height="1.01" fill="#D4D4D4"/>
<rect x="519.84" y="112.50" width="4.96" height="1.01" fill="#CE9178"/>
<rect x="524.80" y="112.50" width="0.62" height="1.01" fill="#D4D4D4"/>
<rect x="525.42" y="112.50" width="0.62" height="1.01" fill="#D4D4D4"/>
<rect x="526.04" y="112.50" width="5.58" height="1.01" fill="#9CDCFE"/>
<rect x="532.24" y="112.50" width="0.62" height="1.01" fill="#D4D4D4"/>
<rect x="532.86" y="112.50" width="0.62" height="1.01" fill="#D4D4D4"/>
<rect x="534.10" y="112.50" width="3.72" height="1.01" fill="#CE9178"/>
<rect x="504.96" y="113.95" width="0.62" height="1.01" fill="#9CDCFE"/>
<rect x="505.58" y="113.95" width="0.62" height="1.01" fill="#D4D4D4"/>
<rect x="506.20" y="113.95" width="0.62" height="1.01" fill="#D4D4D4"/>
<rect x="506.82" y="113.95" width="0.62" height="1.01" fill="#D4D4D4"/>
<rect x="502.48" y="115.40" width="0.62" height="1.01" fill="#D4D4D4"/>
<rect x="500.00" y="116.85" width="0.62" height="1.01" fill="#D4D4D4"/>
<rect x="500.00" y="119.75" width="5.58" height="1.01" fill="#6A9955"/>
<rect x="506.20" y="119.75" width="3.10" height="1.01" fill="#6A9955"/>
<rect x="509.92" y="119.75" width="2.48" height="1.01" fill="#6A9955"/>
<rect x="500.00" y="121.20" width="4.96" height="1.01" fill="#569CD6"/>
<rect x="505.58" y="121.20" width="6.20" height="1.01" fill="#DCDCAA"/>
<rect x="511.78" y="121.20" width="0.62" height="1.01" fill="#D4D4D4"/>
<rect x="512.40" y="121.20" width="0.62" height="1.01" fill="#D4D4D4"/>
<rect x="513.02" y="121.20" width="0.62" height="1.01" fill="#D4D4D4"/>
<rect x="502.48" y="122.65" width="1.86" height="1.01" fill="#569CD6"/>
<rect x="504.96" y="122.65" width="0.62" height="1.01" fill="#9CDCFE"/>
<rect x="506.20" y="122.65" width="0.62" height="1.01" fill="#D4D4D4"/>
<rect x="507.44" y="122.65" width="4.96" height="1.01" fill="#9CDCFE"/>
<rect x="512.40" y="122.65" width="0.62" height="1.01" fill="#D4D4D4"/>
<rect x="513.02" y="122.65" width="8.68" height="1.01" fill="#DCDCAA"/>
<rect x="521.70" y="122.65" width="0.62" height="1.01" fill="#D4D4D4"/>
<rect x="522.32" y="122.65" width="8.06" height="1.01" fill="#CE9178"/>
<rect x="530.38" y="122.65" width="0.62" height="1.01" fill="#D4D4D4"/>
<rect x="531.00" y="122.65" width="0.62" height="1.01" fill="#D4D4D4"/>
<rect x="531.62" y="122.65" width="3.10" height="1.01" fill="#9CDCFE"/>
<rect x="534.72" y="122.65" width="0.62" height="1.01" fill="#D4D4D4"/>
<rect x="502.48" y="124.10" width="1.86" height="1.01" fill="#569CD6"/>
<rect x="504.96" y="124.10" width="0.62" height="1.01" fill="#9CDCFE"/>
<rect x="506.20" y="124.10" width="0.62" height="1.01" fill="#D4D4D4"/>
<rect x="507.44" y="124.10" width="0.62" height="1.01" fill="#B5CEA8"/>
<rect x="508.06" y="124.10" width="0.62" height="1.01" fill="#D4D4D4"/>
<rect x="502.48" y="125.55" width="1.86" height="1.01" fill="#569CD6"/>
<rect x="504.96" y="125.55" width="3.10" height="1.01" fill="#9CDCFE"/>
<rect x="508.68" y="125.55" width="0.62" height="1.01" fill="#D4D4D4"/>
<rect x="509.92" y="125.55" width="2.48" height="1.01" fill="#569CD6"/>
<rect x="512.40" y="125.55" width="0.62" height="1.01" fill="#D4D4D4"/>
<rect x="502.48" y="127.00" width="3.10" height="1.01" fill="#C586C0"/>
<rect x="505.58" y="127.00" width="0.62" height="1.01" fill="#D4D4D4"/>
<rect x="506.20" y="127.00" width="0.62" height="1.01" fill="#9CDCFE"/>
<rect x="507.44" y="127.00" width="0.62" height="1.01" fill="#D4D4D4"/>
<rect x="508.68" y="127.00" width="0.62" height="1.01" fill="#9CDCFE"/>
<rect x="509.30" y="127.00" width="0.62" height="1.01" fill="#D4D4D4"/>
<rect x="509.92" y="127.00" width="0.62" height="1.01" fill="#D4D4D4"/>
<rect x="504.96" y="128.45" width="1.24" height="1.01" fill="#C586C0"/>
<rect x="506.20" y="128.45" width="0.62" height="1.01" fill="#D4D4D4"/>
<rect x="506.82" y="128.45" width="0.62" height="1.01" fill="#9CDCFE"/>
<rect x="508.06" y="128.45" width="0.62" height="1.01" fill="#D4D4D4"/>
<rect x="509.30" y="128.45" width="0.62" height="1.01" fill="#9CDCFE"/>
<rect x="510.54" y="128.45" width="0.62" height="1.01" fill="#D4D4D4"/>
<rect x="511.16" y="128.45" width="0.62" height="1.01" fill="#D4D4D4"/>
<rect x="512.40" y="128.45" width="0.62" height="1.01" fill="#B5CEA8"/>
<rect x="513.02" y="128.45" width="0.62" height="1.01" fill="#D4D4D4"/>
<rect x="513.64" y="128.45" width="0.62" height="1.01" fill="#D4D4D4"/>
<rect x="507.44" y="129.90" width="3.10" height="1.01" fill="#9CDCFE"/>
<rect x="511.16" y="129.90" width="0.62" height="1.01" fill="#D4D4D4"/>
<rect x="512.40" y="129.90" width="3.10" height="1.01" fill="#569CD6"/>
<rect x="515.50" y="129.90" width="0.62" height="1.01" fill="#D4D4D4"/>
<rect x="507.44" y="131.35" width="3.10" height="1.01" fill="#C586C0"/>
<rect x="510.54" y="131.35" width="0.62" height="1.01" fill="#D4D4D4"/>
<rect x="504.96" y="132.80" width="0.62" height="1.01" fill="#D4D4D4"/>
<rect x="504.96" y="134.25" width="0.62" height="1.01" fill="#9CDCFE"/>
<rect x="505.58" y="134.25" width="0.62" height="1.01" fill="#D4D4D4"/>
<rect x="506.20" y="134.25" width="0.62" height="1.01" fill="#D4D4D4"/>
<rect x="506.82" y="134.25" width="0.62" height="1.01" fill="#D4D4D4"/>
<rect x="502.48" y="135.70" width="0.62" height="1.01" fill="#D4D4D4"/>
<rect x="502.48" y="137.15" width="1.24" height="1.01" fill="#C586C0"/>
<rect x="503.72" y="137.15" width="0.62" height="1.01" fill="#D4D4D4"/>
<rect x="504.34" y="137.15" width="3.10" height="1.01" fill="#9CDCFE"/>
<rect x="507.44" y="137.15" width="0.62" height="1.01" fill="#D4D4D4"/>
<rect x="508.06" y="137.15" width="0.62" height="1.01" fill="#D4D4D4"/>
<rect x="504.96" y="138.60" width="4.96" height="1.01" fill="#9CDCFE"/>
<rect x="509.92" y="138.60" width="0.62" height="1.01" fill="#D4D4D4"/>
<rect x="510.54" y="138.60" width="8.68" height="1.01" fill="#DCDCAA"/>
<rect x="519.22" y="138.60" width="0.62" height="1.01" fill="#D4D4D4"/>
<rect x="519.84" y="138.60" width="4.96" height="1.01" fill="#CE9178"/>
<rect x="524.80" y="138.60" width="0.62" height="1.01" fill="#D4D4D4"/>
<rect x="525.42" y="138.60" width="0.62" height="1.01" fill="#D4D4D4"/>
<rect x="526.04" y="138.60" width="5.58" height="1.01" fill="#9CDCFE"/>
<rect x="532.24" y="138.60" width="0.62" height="1.01" fill="#D4D4D4"/>
<rect x="533.48" y="138.60" width="0.62" height="1.01" fill="#9CDCFE"/>
<rect x="534.72" y="138.60" width="0.62" height="1.01" fill="#D4D4D4"/>
<rect x="535.96" y="138.60" width="0.62" height="1.01" fill="#CE9178"/>
<rect x="537.20" y="138.60" width="0.80" height="1.01" fill="#CE9178"/>
<rect x="502.48" y="140.05" width="0.62" height="1.01" fill="#D4D4D4"/>
<rect x="503.10" y="140.05" width="2.48" height="1.01" fill="#C586C0"/>
<rect x="505.58" y="140.05" width="0.62" height="1.01" fill="#D4D4D4"/>
<rect x="504.96" y="141.50" width="4.96" height="1.01" fill="#9CDCFE"/>
<rect x="509.92" y="141.50" width="0.62" height="1.01" fill="#D4D4D4"/>
<rect x="510.54" y="141.50" width="8.68" height="1.01" fill="#DCDCAA"/>
<rect x="519.22" y="141.50" width="0.62" height="1.01" fill="#D4D4D4"/>
<rect x="519.84" y="141.50" width="4.96" height="1.01" fill="#CE9178"/>
<rect x="524.80" y="141.50" width="0.62" height="1.01" fill="#D4D4D4"/>
<rect x="525.42" y="141.50" width="0.62" height="1.01" fill="#D4D4D4"/>
<rect x="526.04" y="141.50" width="5.58" height="1.01" fill="#9CDCFE"/>
<rect x="532.24" y="141.50" width="0.62" height="1.01" fill="#D4D4D4"/>
<rect x="533.48" y="141.50" width="0.62" height="1.01" fill="#9CDCFE"/>
<rect x="534.72" y="141.50" width="0.62" height="1.01" fill="#D4D4D4"/>
<rect x="535.96" y="141.50" width="0.62" height="1.01" fill="#CE9178"/>
<rect x="537.20" y="141.50" width="0.80" height="1.01" fill="#CE9178"/>
<rect x="502.48" y="142.95" width="0.62" height="1.01" fill="#D4D4D4"/>
<rect x="500.00" y="144.40" width="0.62" height="1.01" fill="#D4D4D4"/>
<rect x="500.00" y="147.30" width="5.58" height="1.01" fill="#6A9955"/>
<rect x="506.20" y="147.30" width="4.96" height="1.01" fill="#6A9955"/>
<rect x="511.78" y="147.30" width="2.48" height="1.01" fill="#6A9955"/>
<rect x="500.00" y="148.75" width="4.96" height="1.01" fill="#569CD6"/>
<rect x="505.58" y="148.75" width="4.34" height="1.01" fill="#DCDCAA"/>
<rect x="509.92" y="148.75" width="0.62" height="1.01" fill="#D4D4D4"/>
<rect x="510.54" y="148.75" width="0.62" height="1.01" fill="#D4D4D4"/>
<rect x="511.16" y="148.75" width="0.62" height="1.01" fill="#D4D4D4"/>
<rect x="502.48" y="150.20" width="1.86" height="1.01" fill="#569CD6"/>
<rect x="504.96" y="150.20" width="0.62" height="1.01" fill="#9CDCFE"/>
<rect x="506.20" y="150.20" width="0.62" height="1.01" fill="#D4D4D4"/>
<rect x="507.44" y="150.20" width="4.96" height="1.01" fill="#9CDCFE"/>
<rect x="512.40" y="150.20" width="0.62" height="1.01" fill="#D4D4D4"/>
<rect x="513.02" y="150.20" width="8.68" height="1.01" fill="#DCDCAA"/>
<rect x="521.70" y="150.20" width="0.62" height="1.01" fill="#D4D4D4"/>
<rect x="522.32" y="150.20" width="5.58" height="1.01" fill="#CE9178"/>
<rect x="527.90" y="150.20" width="0.62" height="1.01" fill="#D4D4D4"/>
<rect x="528.52" y="150.20" width="0.62" height="1.01" fill="#D4D4D4"/>
<rect x="529.14" y="150.20" width="3.10" height="1.01" fill="#9CDCFE"/>
<rect x="532.24" y="150.20" width="0.62" height="1.01" fill="#D4D4D4"/>
<rect x="502.48" y="151.65" width="1.86" height="1.01" fill="#569CD6"/>
<rect x="504.96" y="151.65" width="0.62" height="1.01" fill="#9CDCFE"/>
<rect x="506.20" y="151.65" width="0.62" height="1.01" fill="#D4D4D4"/>
<rect x="507.44" y="151.65" width="0.62" height="1.01" fill="#B5CEA8"/>
<rect x="508.06" y="151.65" width="0.62" height="1.01" fill="#D4D4D4"/>
<rect x="502.48" y="153.10" width="1.24" height="1.01" fill="#C586C0"/>
<rect x="503.72" y="153.10" width="0.62" height="1.01" fill="#D4D4D4"/>
<rect x="504.96" y="154.55" width="4.96" height="1.01" fill="#9CDCFE"/>
<rect x="509.92" y="154.55" width="0.62" height="1.01" fill="#D4D4D4"/>
<rect x="510.54" y="154.55" width="8.68" height="1.01" fill="#DCDCAA"/>
<rect x="519.22" y="154.55" width="0.62" height="1.01" fill="#D4D4D4"/>
<rect x="519.84" y="154.55" width="4.96" height="1.01" fill="#CE9178"/>
<rect x="524.80" y="154.55" width="0.62" height="1.01" fill="#D4D4D4"/>
<rect x="525.42" y="154.55" width="0.62" height="1.01" fill="#D4D4D4"/>
<rect x="526.04" y="154.55" width="5.58" height="1.01" fill="#9CDCFE"/>
<rect x="532.24" y="154.55" width="0.62" height="1.01" fill="#D4D4D4"/>
<rect x="532.86" y="154.55" width="0.62" height="1.01" fill="#D4D4D4"/>
<rect x="534.10" y="154.55" width="3.72" height="1.01" fill="#CE9178"/>
<rect x="504.96" y="156.00" width="0.62" height="1.01" fill="#9CDCFE"/>
<rect x="505.58" y="156.00" width="0.62" height="1.01" fill="#D4D4D4"/>
<rect x="506.20" y="156.00" width="0.62" height="1.01" fill="#D4D4D4"/>
<rect x="506.82" y="156.00" width="0.62" height="1.01" fill="#D4D4D4"/>
<rect x="502.48" y="157.45" width="0.62" height="1.01" fill="#D4D4D4"/>
<rect x="503.10" y="157.45" width="3.10" height="1.01" fill="#C586C0"/>
<rect x="506.20" y="157.45" width="0.62" height="1.01" fill="#D4D4D4"/>
<rect x="506.82" y="157.45" width="0.62" height="1.01" fill="#9CDCFE"/>
<rect x="508.06" y="157.45" width="0.62" height="1.01" fill="#D4D4D4"/>
<rect x="508.68" y="157.45" width="0.62" height="1.01" fill="#D4D4D4"/>
<rect x="509.92" y="157.45" width="0.62" height="1.01" fill="#9CDCFE"/>
<rect x="510.54" y="157.45" width="0.62" height="1.01" fill="#D4D4D4"/>
<rect x="511.16" y="157.45" width="0.62" height="1.01" fill="#D4D4D4"/>
<rect x="500.00" y="158.90" width="0.62" height="1.01" fill="#D4D4D4"/>
<rect x="500.00" y="161.80" width="5.58" height="1.01" fill="#6A9955"/>
<rect x="506.20" y="161.80" width="3.10" height="1.01" fill="#6A9955"/>
<rect x="509.92" y="161.80" width="0.62" height="1.01" fill="#6A9955"/>
<rect x="511.16" y="161.80" width="4.96" height="1.01" fill="#6A9955"/>
<rect x="500.00" y="163.25" width="4.96" height="1.01" fill="#569CD6"/>
<rect x="505.58" y="163.25" width="8.06" height="1.01" fill="#DCDCAA"/>
<rect x="513.64" y="163.25" width="0.62" height="1.01" fill="#D4D4D4"/>
<rect x="514.26" y="163.25" width="0.62" height="1.01" fill="#D4D4D4"/>
<rect x="514.88" y="163.25" width="0.62" height="1.01" fill="#D4D4D4"/>
<rect x="502.48" y="164.70" width="1.86" height="1.01" fill="#569CD6"/>
<rect x="504.96" y="164.70" width="0.62" height="1.01" fill="#9CDCFE"/>
<rect x="506.20" y="164.70" width="0.62" height="1.01" fill="#D4D4D4"/>
<rect x="507.44" y="164.70" width="4.96" height="1.01" fill="#9CDCFE"/>
<rect x="512.40" y="164.70" width="0.62" height="1.01" fill="#D4D4D4"/>
<rect x="513.02" y="164.70" width="8.68" height="1.01" fill="#DCDCAA"/>
<rect x="521.70" y="164.70" width="0.62" height="1.01" fill="#D4D4D4"/>
<rect x="522.32" y="164.70" width="6.20" height="1.01" fill="#CE9178"/>
<rect x="528.52" y="164.70" width="0.62" height="1.01" fill="#D4D4D4"/>
<rect x="529.14" y="164.70" width="0.62" height="1.01" fill="#D4D4D4"/>
<rect x="529.76" y="164.70" width="3.10" height="1.01" fill="#9CDCFE"/>
<rect x="532.86" y="164.70" width="0.62" height="1.01" fill="#D4D4D4"/>
<rect x="502.48" y="166.15" width="1.86" height="1.01" fill="#C586C0"/>
<rect x="504.34" y="166.15" width="0.62" height="1.01" fill="#D4D4D4"/>
<rect x="504.96" y="166.15" width="1.86" height="1.01" fill="#569CD6"/>
<rect x="507.44" y="166.15" width="0.62" height="1.01" fill="#9CDCFE"/>
<rect x="508.68" y="166.15" width="0.62" height="1.01" fill="#D4D4D4"/>
<rect x="509.92" y="166.15" width="0.62" height="1.01" fill="#B5CEA8"/>
<rect x="510.54" y="166.15" width="0.62" height="1.01" fill="#D4D4D4"/>
<rect x="511.78" y="166.15" width="0.62" height="1.01" fill="#9CDCFE"/>
<rect x="513.02" y="166.15" width="0.62" height="1.01" fill="#D4D4D4"/>
<rect x="513.64" y="166.15" width="0.62" height="1.01" fill="#D4D4D4"/>
<rect x="514.88" y="166.15" width="1.24" height="1.01" fill="#B5CEA8"/>
<rect x="516.12" y="166.15" width="0.62" height="1.01" fill="#D4D4D4"/>
<rect x="517.36" y="166.15" width="0.62" height="1.01" fill="#9CDCFE"/>
<rect x="517.98" y="166.15" width="0.62" height="1.01" fill="#D4D4D4"/>
<rect x="518.60" y="166.15" width="0.62" height="1.01" fill="#D4D4D4"/>
<rect x="519.22" y="166.15" width="0.62" height="1.01" fill="#D4D4D4"/>
<rect x="519.84" y="166.15" width="0.62" height="1.01" fill="#D4D4D4"/>
<rect x="504.96" y="167.60" width="1.24" height="1.01" fill="#C586C0"/>
<rect x="506.20" y="167.60" width="0.62" height="1.01" fill="#D4D4D4"/>
<rect x="506.82" y="167.60" width="0.62" height="1.01" fill="#9CDCFE"/>
<rect x="508.06" y="167.60" width="0.62" height="1.01" fill="#D4D4D4"/>
<rect x="508.68" y="167.60" width="0.62" height="1.01" fill="#D4D4D4"/>
<rect x="509.92" y="167.60" width="0.62" height="1.01" fill="#9CDCFE"/>
<rect x="510.54" y="167.60" width="0.62" height="1.01" fill="#D4D4D4"/>
<rect x="511.78" y="167.60" width="4.96" height="1.01" fill="#C586C0"/>
<rect x="516.74" y="167.60" width="0.62" height="1.01" fill="#D4D4D4"/>
<rect x="504.96" y="169.05" width="4.96" height="1.01" fill="#9CDCFE"/>
<rect x="509.92" y="169.05" width="0.62" height="1.01" fill="#D4D4D4"/>
<rect x="510.54" y="169.05" width="8.68" height="1.01" fill="#DCDCAA"/>
<rect x="519.22" y="169.05" width="0.62" height="1.01" fill="#D4D4D4"/>
<rect x="519.84" y="169.05" width="4.96" height="1.01" fill="#CE9178"/>
<rect x="524.80" y="169.05" width="0.62" height="1.01" fill="#D4D4D4"/>
<rect x="525.42" y="169.05" width="0.62" height="1.01" fill="#D4D4D4"/>
<rect x="526.04" y="169.05" width="5.58" height="1.01" fill="#9CDCFE"/>
<rect x="532.24" y="169.05" width="0.62" height="1.01" fill="#D4D4D4"/>
<rect x="532.86" y="169.05" width="0.62" height="1.01" fill="#D4D4D4"/>
<rect x="534.10" y="169.05" width="0.62" height="1.01" fill="#9CDCFE"/>
<rect x="535.34" y="169.05" width="0.62" height="1.01" fill="#D4D4D4"/>
<rect x="536.58" y="169.05" width="1.42" height="1.01" fill="#CE9178"/>
<rect x="502.48" y="170.50" width="0.62" height="1.01" fill="#D4D4D4"/>
<rect x="500.00" y="171.95" width="0.62" height="1.01" fill="#D4D4D4"/>
</g>
<rect x="539" y="60" width="1" height="338" fill="#2f2f2f"/>
<rect x="540" y="87.6" width="8" height="1" fill="#6a6a6a"/>
<rect x="543" y="87.3" width="3.2" height="3.6" fill="#c4c4c4"/>
<rect x="543" y="111" width="3.2" height="3.8" fill="#c4c4c4"/>
</svg>
  </div></div>
  <div id="status">
    <svg class="abs" style="left:10px;top:3px" width="9" height="9" viewBox="0 0 9 9"><circle cx="4.5" cy="4.5" r="3.7" fill="none" stroke="#fff" stroke-width="1"/><path d="M2.9 2.9 L6.1 6.1 M6.1 2.9 L2.9 6.1" stroke="#fff" stroke-width="1"/></svg>
    <span class="s" style="left:21px">0</span>
    <svg class="abs" style="left:28px;top:3px" width="10" height="9" viewBox="0 0 10 9"><path d="M5 0.8 L9.2 8.3 H0.8 Z" fill="none" stroke="#fff" stroke-width="1" stroke-linejoin="round"/><path d="M5 3.3 V5.8 M5 6.6 V7.4" stroke="#fff" stroke-width="0.9"/></svg>
    <span class="s" style="left:40px">0</span>
    <span class="s" style="left:130px">Ln 12, Col 21</span>
    <span class="s" style="left:187px">Spaces: 4</span>
    <span class="s" style="left:232px">UTF-8</span>
    <span class="s" style="left:265px">CRLF</span>
    <span class="s" style="left:294px;letter-spacing:0.5px">{ }</span>
    <span class="s" style="left:308px">JavaScript</span>
    <svg class="abs" style="left:356px;top:3px" width="9" height="9" viewBox="0 0 9 9"><circle cx="4.5" cy="4.5" r="3.7" fill="none" stroke="#fff" stroke-width="1"/><path d="M2 7 L7 2" stroke="#fff" stroke-width="1"/></svg>
    <span class="s" style="left:368px">Port : 5500</span>
    <svg class="abs" style="left:418px;top:3px" width="9" height="9" viewBox="0 0 9 9"><path d="M0.8 4.8 L3.2 7.2 L8.2 1.6" fill="none" stroke="#fff" stroke-width="1"/></svg>
    <span class="s" style="left:429px">Spell</span>
    <svg class="abs" style="left:458px;top:3px" width="11" height="9" viewBox="0 0 11 9"><path d="M0.6 5 L2.8 7.4 L7.6 1.4 M4.6 6.6 L5.6 7.4 L10.4 1.4" fill="none" stroke="#fff" stroke-width="1"/></svg>
    <span class="s" style="left:470px">Prettier</span>
    <svg class="abs" style="left:508px;top:2px" width="10" height="11" viewBox="0 0 10 11"><path d="M2 1 H9 V6.5 H5.5 L3 9.5 V6.5 H2 Z" fill="none" stroke="#fff" stroke-width="0.9"/><path d="M0.8 10 L3.8 4.6" stroke="#fff" stroke-width="0.9"/></svg>
    <svg class="abs" style="left:529px;top:2px" width="11" height="11" viewBox="0 0 11 11"><path d="M2 8.4 H8.6 L7.6 7 V4.4 Q7.6 1.6 5.2 1.6 Q2.8 1.6 2.8 4.4 V7 Z M4.2 9.4 Q5.2 10.6 6.2 9.4" fill="none" stroke="#fff" stroke-width="0.9"/><circle cx="8.4" cy="2.6" r="2" fill="#fff"/></svg>
  </div>
</div>
<div id="br">
  <div class="abs" style="left:0;top:0;width:219px;height:22px;background:#ffffff"></div>
  <svg class="abs" style="left:0;top:0" width="219" height="41" viewBox="549 0 219 41">
    <rect x="549" y="22" width="219" height="18.5" fill="#f2f2f2"/>
    <path d="M549 22.2 H551 L557.7 9.6 H645.4 L650.9 22.2 H768" fill="#f2f2f2" stroke="#a7a7a7" stroke-width="0.8"/>
    <path d="M651 12.6 H661.5 L666 20.3 H655 Z" fill="#d5d5d5" stroke="#c2c2c2" stroke-width="0.6"/>
    <rect x="549" y="40" width="219" height="1" fill="#b9b9b9"/>
    <!-- profile -->
    <rect x="687" y="0.8" width="12" height="9" fill="#adadad"/>
    <circle cx="693" cy="4.2" r="1.6" fill="#fff"/>
    <path d="M690.4 8.4 Q690.6 6.2 693 6.2 Q695.4 6.2 695.6 8.4 Z" fill="#fff"/>
    <!-- window controls -->
    <path d="M710.5 7.5 H716" stroke="#222" stroke-width="0.75"/>
    <rect x="732.5" y="5.3" width="4.7" height="4.3" fill="none" stroke="#222" stroke-width="0.75"/>
    <path d="M754.5 5.1 L759.5 9.7 M759.5 5.1 L754.5 9.7" stroke="#222" stroke-width="0.75"/>
    <!-- tab icon -->
    <path d="M561.3 13.3 H564 L565.8 15.1 V19.2 H561.3 Z M563.9 13.3 V15.2 H565.8" fill="none" stroke="#5a5a5a" stroke-width="0.7"/>
    <path d="M638.3 14.3 L642.1 18.1 M642.1 14.3 L638.3 18.1" stroke="#5a5a5a" stroke-width="0.9"/>
    <!-- nav -->
    <path d="M554.6 31.6 H561.2 M557.8 28.4 L554.6 31.6 L557.8 34.8" fill="none" stroke="#c4c4c4" stroke-width="0.9"/>
    <path d="M567.4 31.6 H574 M570.8 28.4 L574 31.6 L570.8 34.8" fill="none" stroke="#c4c4c4" stroke-width="0.9"/>
    <path d="M587.6 30.4 A3.1 3.1 0 1 0 587.4 33.4" fill="none" stroke="#5a5a5a" stroke-width="1"/>
    <path d="M585.6 28.4 H588.4 V31.2 Z" fill="#5a5a5a"/>
    <!-- omnibox -->
    <rect x="593.9" y="25.3" width="156.3" height="12.9" rx="1" fill="#fff" stroke="#c4c4c4" stroke-width="0.8"/>
    <circle cx="600.3" cy="31.7" r="3.2" fill="none" stroke="#5a5a5a" stroke-width="0.8"/>
    <path d="M600.3 30.6 V33.6 M600.3 29.4 V30" stroke="#5a5a5a" stroke-width="0.8"/>
    <circle cx="732" cy="31.7" r="2.4" fill="none" stroke="#5a5a5a" stroke-width="0.8"/>
    <path d="M733.8 33.5 L735.8 35.3" stroke="#5a5a5a" stroke-width="1"/>
    <path d="M731 31.7 H733 M732 30.7 V32.7" stroke="#5a5a5a" stroke-width="0.6"/>
    <path d="M743.5 28.9 L744.5 31 L746.8 31.2 L745 32.7 L745.6 35 L743.5 33.7 L741.4 35 L742 32.7 L740.2 31.2 L742.5 31 Z" fill="none" stroke="#5a5a5a" stroke-width="0.7" stroke-linejoin="round"/>
    <circle cx="759.3" cy="29.3" r="0.65" fill="#5a5a5a"/>
    <circle cx="759.3" cy="31.8" r="0.65" fill="#5a5a5a"/>
    <circle cx="759.3" cy="34.3" r="0.65" fill="#5a5a5a"/>
  </svg>
  <div class="abs" style="left:21.2px;top:11.3px;line-height:10px;font-size:6.4px;transform:scaleX(0.845);transform-origin:0 0;color:#333;white-space:nowrap">JavaScript Ex14</div>
  <div class="abs" style="left:59px;top:27px;line-height:10px;font-size:7.4px;white-space:nowrap;transform:scaleX(0.872);transform-origin:0 0;color:#222">127.0.0.1<span style="color:#7a7a7a">:5500/ex14/js_ex14.html</span></div>
  <!-- scrollbar -->
  <div class="abs" style="left:211px;top:41px;width:8px;height:372px;background:#f1f1f1"></div>
  <div class="abs" style="left:212px;top:118px;width:6px;height:71px;background:#c1c1c1"></div>
  <svg class="abs" style="left:211px;top:41px" width="8" height="372" viewBox="760 41 8 372"><path d="M762 46.3 L764 44.3 L766 46.3 Z M762 408 L764 410 L766 408 Z" fill="#505050"/></svg>
  <!-- page -->
  <div id="page">
<div class="pt pb" style="top:48.16px">Ex14.3: For-of Loop</div>
<div class="pt pb" style="top:68.76px">Iteration using for-of loop</div>
<div class="pt" style="top:89.36px">Data</div>
<div class="inp" style="left:4.9px;top:100.50px;width:96.4px;height:12.50px"></div>
<div class="it" style="left:6.5px;top:102.00px">Benz</div>
<div class="inp" style="left:4.9px;top:113.40px;width:96.4px;height:12.60px"></div>
<div class="it" style="left:6.5px;top:114.90px">BMW</div>
<div class="inp" style="left:4.9px;top:126.25px;width:96.4px;height:12.50px"></div>
<div class="it" style="left:6.5px;top:127.75px">Ferrari</div>
<div class="abs" style="left:5.2px;top:139.4px;width:48.2px;height:12.1px;border:1px solid #acacac;border-radius:1.5px;background:linear-gradient(#f3f3f3,#dedede)"></div>
<div class="it" style="left:10px;top:140.5px">Show Data</div>
<div class="pt" style="top:162.06px">Benz</div>
<div class="pt" style="top:172.96px">BMW</div>
<div class="pt" style="top:183.76px">Ferrari</div>
<div class="hr" style="top:205px"></div>
<div class="pt pb" style="top:215.76px">Ex14.4: While Loop ~For Loop</div>
<div class="pt pb" style="top:236.36px">Iteration using while loop</div>
<div class="pt" style="top:256.96px">round by while: </div>
<div class="inp" style="left:68px;top:257px;width:97px;height:12.5px"></div>
<div class="it" style="left:69.6px;top:258.5px">6</div>
<div class="pt" style="top:279.96px">Round 1: I love JavaScript Programming</div>
<div class="pt" style="top:291.06px">Round 2: I love JavaScript Programming</div>
<div class="pt" style="top:302.16px">Round 3: I love JavaScript Programming</div>
<div class="pt" style="top:313.26px">Round 4: I love JavaScript Programming</div>
<div class="pt" style="top:324.26px">Round 5: I love JavaScript Programming</div>
<div class="pt" style="top:335.16px">Round 6: I love JavaScript Programming</div>
<div class="hr" style="top:355px"></div>
<div class="pt pb" style="top:366.16px">Ex14.5: While Loop</div>
<div class="pt pb" style="top:387.06px">Checking using while loop</div>
<div class="pt" style="top:407.76px">Enter number (2-12): </div>
<div class="inp" style="left:89px;top:407px;width:97px;height:12.5px"></div>
<div class="it" style="left:90.6px;top:408.5px">9</div>
  </div>
</div>
</body></html>
